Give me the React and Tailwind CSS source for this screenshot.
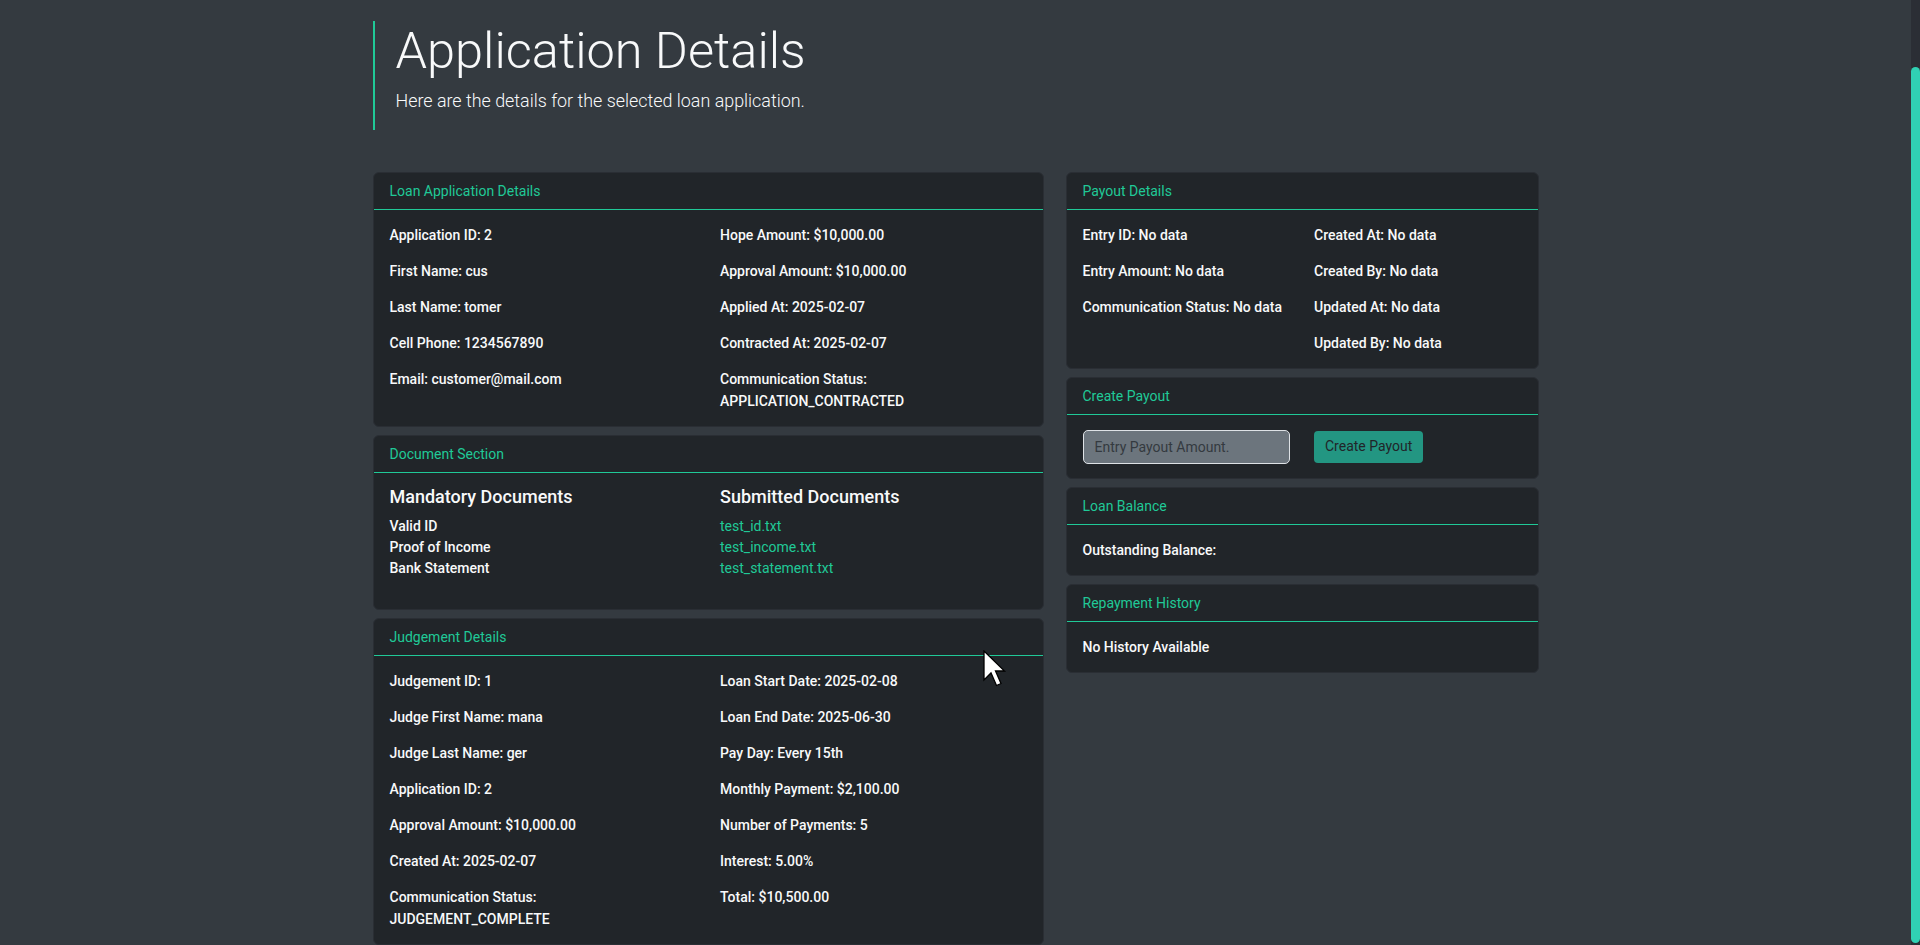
import React from "react";

const font = { fontFamily: "Roboto, 'Noto Sans', 'Liberation Sans', sans-serif" };

function Card({ title, children, bodyClass = "" }) {
  return (
    <div className="rounded-[6px] border border-[#2a2e34] bg-[#212529]">
      <div className="border-b border-[#20c997] px-4 py-2 text-[14px] leading-[20px] text-[#20c997]">
        {title}
      </div>
      <div className={"px-4 pt-[14px] pb-[14px] " + bodyClass}>{children}</div>
    </div>
  );
}

function Rows({ rows, nowrap = false }) {
  return (
    <div className="grid grid-cols-2 gap-x-6 gap-y-[14px] text-[14px] font-medium leading-[22px] text-[#f8f9fa]">
      {rows.map((r, i) => (
        <React.Fragment key={i}>
          <div className={nowrap ? "whitespace-nowrap" : ""}>{r[0]}</div>
          <div className={nowrap ? "whitespace-nowrap" : ""}>{r[1]}</div>
        </React.Fragment>
      ))}
    </div>
  );
}

export default function App() {
  const loanRows = [
    ["Application ID: 2", "Hope Amount: $10,000.00"],
    ["First Name: cus", "Approval Amount: $10,000.00"],
    ["Last Name: tomer", "Applied At: 2025-02-07"],
    ["Cell Phone: 1234567890", "Contracted At: 2025-02-07"],
    [
      "Email: customer@mail.com",
      <>
        Communication Status:
        <br />
        APPLICATION_CONTRACTED
      </>,
    ],
  ];
  const judgeRows = [
    ["Judgement ID: 1", "Loan Start Date: 2025-02-08"],
    ["Judge First Name: mana", "Loan End Date: 2025-06-30"],
    ["Judge Last Name: ger", "Pay Day: Every 15th"],
    ["Application ID: 2", "Monthly Payment: $2,100.00"],
    ["Approval Amount: $10,000.00", "Number of Payments: 5"],
    ["Created At: 2025-02-07", "Interest: 5.00%"],
    [
      <>
        Communication Status:
        <br />
        JUDGEMENT_COMPLETE
      </>,
      "Total: $10,500.00",
    ],
  ];
  const payoutRows = [
    ["Entry ID: No data", "Created At: No data"],
    ["Entry Amount: No data", "Created By: No data"],
    ["Communication Status: No data", "Updated At: No data"],
    ["", "Updated By: No data"],
  ];

  return (
    <div className="relative flex h-screen w-full overflow-hidden bg-[#343a40]" style={font}>
      <main className="flex-1 overflow-hidden">
        <div className="mx-auto w-[1166px] pt-[21px]">
          <header className="border-l-2 border-[#20c997] pl-[21px] pt-0 pb-[16px]">
            <h1 className="text-[50.5px] font-light leading-[1.2] text-[#f8f9fa]">Application Details</h1>
            <p className="mt-[6px] text-[17.9px] font-light leading-[26px] text-[#f8f9fa]">
              Here are the details for the selected loan application.
            </p>
          </header>

          <div className="mt-[42px] grid grid-cols-[671px_473px] items-start gap-x-[22px]">
            <div className="flex flex-col gap-2">
              <Card title="Loan Application Details">
                <Rows rows={loanRows} />
              </Card>

              <Card title="Document Section" bodyClass="!pt-[13px] !pb-[30px]">
                <div className="grid grid-cols-2 gap-x-6 text-[#f8f9fa]">
                  <div>
                    <h5 className="mb-[9px] text-[18px] font-medium leading-[21px]">Mandatory Documents</h5>
                    <ul className="text-[14px] font-medium leading-[21px]">
                      <li>Valid ID</li>
                      <li>Proof of Income</li>
                      <li>Bank Statement</li>
                    </ul>
                  </div>
                  <div>
                    <h5 className="mb-[9px] text-[18px] font-medium leading-[21px]">Submitted Documents</h5>
                    <ul className="text-[14px] leading-[21px] text-[#20c997]">
                      <li>test_id.txt</li>
                      <li>test_income.txt</li>
                      <li>test_statement.txt</li>
                    </ul>
                  </div>
                </div>
              </Card>

              <Card title="Judgement Details">
                <Rows rows={judgeRows} />
              </Card>
            </div>

            <div className="flex flex-col gap-2">
              <Card title="Payout Details">
                <Rows rows={payoutRows} nowrap />
              </Card>

              <Card title="Create Payout" bodyClass="!pt-[15px]">
                <div className="grid grid-cols-2 items-center gap-x-6">
                  <input
                    placeholder="Entry Payout Amount."
                    className="h-[34px] w-full rounded-[5px] border border-[#dee2e6] bg-[#6c757d] px-[11px] text-[14px] text-[#212529] outline-none placeholder:text-[#343a40]"
                  />
                  <div>
                    <button className="h-[32px] rounded-[4px] bg-[#239682] px-[11px] text-[14px] text-[#212529]">
                      Create Payout
                    </button>
                  </div>
                </div>
              </Card>

              <Card title="Loan Balance">
                <div className="text-[14px] font-medium leading-[22px] text-[#f8f9fa]">Outstanding Balance:</div>
              </Card>

              <Card title="Repayment History">
                <div className="text-[14px] font-medium leading-[22px] text-[#f8f9fa]">No History Available</div>
              </Card>
            </div>
          </div>
        </div>
      </main>

      <aside className="flex w-[9px] flex-col bg-[#2b2e35]">
        <div className="h-[67px]" />
        <div className="mb-[2px] flex-1 rounded-full bg-[#30d1b4]" />
      </aside>

      <svg
        className="pointer-events-none absolute left-[983px] top-[650px]"
        width="24"
        height="38"
        viewBox="0 0 24 38"
      >
        <path
          d="M1 1 L1 30 L8 23 L13.5 35.5 L18 33.5 L12.5 21 L21.5 21 Z"
          fill="#ffffff"
          stroke="#000000"
          strokeWidth="1.3"
          strokeLinejoin="miter"
        />
      </svg>
    </div>
  );
}
